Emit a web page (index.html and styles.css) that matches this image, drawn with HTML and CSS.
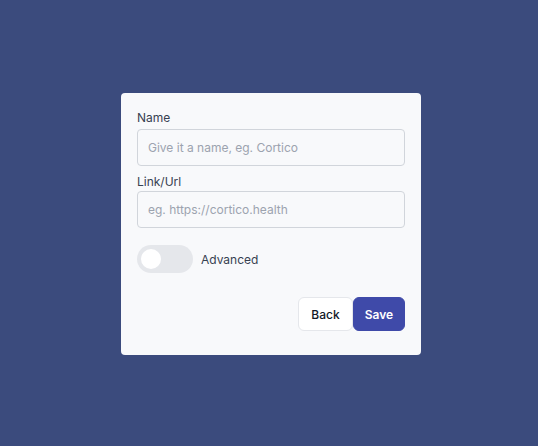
FILE: index.html
```html
<!DOCTYPE html>
<html>
<head>
<meta charset="utf-8">
<link rel="stylesheet" href="styles.css">
</head>
<body>
<div class="page">
  <form class="card">
    <label class="label" for="name">Name</label>
    <input class="input" id="name" type="text" placeholder="Give it a name, eg. Cortico">
    <label class="label label-second" for="url">Link/Url</label>
    <input class="input" id="url" type="text" placeholder="eg. https://cortico.health">
    <div class="toggle-row">
      <span class="toggle"><span class="knob"></span></span>
      <span class="toggle-text">Advanced</span>
    </div>
    <div class="actions">
      <button type="button" class="btn btn-back">Back</button>
      <button type="button" class="btn btn-save">Save</button>
    </div>
  </form>
</div>
</body>
</html>
```
FILE: styles.css
```css
* { box-sizing: border-box; }
html, body { margin: 0; padding: 0; }
body {
  background: #3b4b7d;
  font-family: Inter, "Noto Sans", sans-serif;
  width: 538px;
  height: 446px;
}
.page {
  height: 446px;
  display: flex;
  align-items: center;
  justify-content: center;
}
.card {
  width: 300px;
  height: 262px;
  background: #f8f9fb;
  border-radius: 4px;
  padding: 17px 16px 24px;
  display: flex;
  flex-direction: column;
  margin-top: 2px;
  margin-left: 4px;
}
.label {
  font-size: 12px;
  line-height: 16px;
  color: #374151;
  margin-bottom: 3px;
}
.label-second {
  margin-top: 8px;
  margin-bottom: 1px;
}
.input {
  height: 37px;
  border: 1px solid #d1d5db;
  border-radius: 4px;
  background: #f8f9fb;
  padding: 0 10px;
  font-family: inherit;
  font-size: 12px;
  color: #374151;
  outline: none;
}
.input::placeholder { color: #9ca3af; }
.toggle-row {
  display: flex;
  align-items: center;
  gap: 8px;
  margin-top: 17px;
}
.toggle {
  width: 56px;
  height: 28px;
  border-radius: 14px;
  background: #e5e7eb;
  display: flex;
  align-items: center;
  padding-left: 4px;
}
.knob {
  width: 20px;
  height: 20px;
  border-radius: 50%;
  background: #ffffff;
}
.toggle-text {
  font-size: 12px;
  color: #374151;
}
.actions {
  margin-top: auto;
  display: flex;
  justify-content: flex-end;
}
.btn {
  height: 34px;
  border-radius: 6px;
  font-family: inherit;
  font-size: 12px;
  font-weight: 500;
  padding: 0;
  cursor: pointer;
}
.btn-back {
  width: 55px;
  background: #ffffff;
  border: 1px solid #e5e7eb;
  color: #111827;
}
.btn-save {
  width: 52px;
  background: #3f4aa9;
  border: 1px solid #3f4aa9;
  color: #ffffff;
  font-weight: 600;
}
```
